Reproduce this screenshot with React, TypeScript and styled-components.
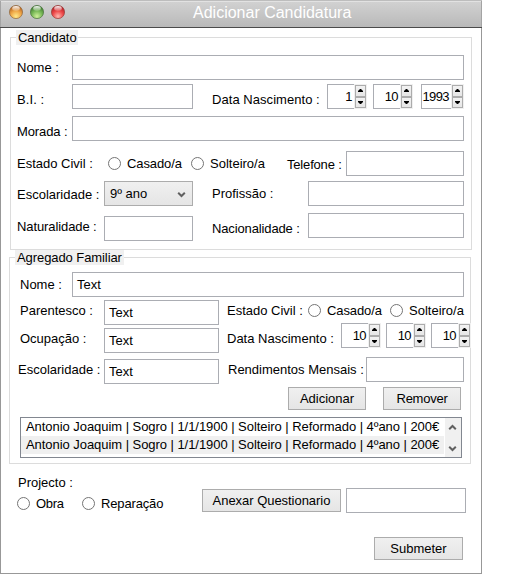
import React from "react";
import styled, { createGlobalStyle } from "styled-components";

const GlobalStyle = createGlobalStyle`
  body { margin: 0; background: #fff; }
  * { box-sizing: border-box; }
`;

const Window = styled.main`
  width: 482px;
  height: 574px;
  border: 1px solid #989898;
  border-top: none;
  background: #fff;
  color: #000;
  font: 13px/15px "Liberation Sans", Arial, sans-serif;
`;

const TitleBar = styled.header`
  display: grid;
  grid-template-columns: 21px 21px 21px 1fr;
  height: 28px;
  margin: 0 -1px;
  padding: 3px 0 0 8px;
  border-top: 1px solid #bdbdbd;
  border-bottom: 1px solid #4b4b4b;
  box-shadow: inset 1px 0 #a4a4a4, inset -1px 0 #a4a4a4, inset 0 1px #e2e2e2;
  background: linear-gradient(#d2d2d2, #b9b9b9);
`;

const Title = styled.h1`
  margin: 0 0 0 122px;
  color: #fff;
  font-size: 16px;
  font-weight: 400;
  line-height: 18px;
  white-space: nowrap;
`;

const Panel = styled.section<{ $left: number; $top: number; $height: number }>`
  width: 462px;
  height: ${(p) => p.$height}px;
  margin: ${(p) => p.$top}px 0 0 ${(p) => p.$left}px;
  border: 1px solid #dcdcdc;
`;

const Legend = styled.h2<{ $width: number }>`
  width: ${(p) => p.$width}px;
  height: 15px;
  margin: -8px 0 0 5px;
  padding-left: 2px;
  background: #f0f0f0;
  font-size: 13px;
  font-weight: 400;
  letter-spacing: -0.08px;
  white-space: nowrap;
`;

const Row = styled.div<{ $cols: string; $left: number; $top?: number; $height?: number }>`
  display: grid;
  grid-template-columns: ${(p) => p.$cols};
  align-items: start;
  justify-items: start;
  height: ${(p) => p.$height ?? 25}px;
  margin-top: ${(p) => p.$top ?? 0}px;
  padding-left: ${(p) => p.$left}px;
`;

const Label = styled.span<{ $top?: number; $track?: number }>`
  margin-top: ${(p) => p.$top ?? 5}px;
  letter-spacing: ${(p) => p.$track ?? 0}px;
  white-space: nowrap;
`;

const Field = styled.div<{ $width: number; $top?: number }>`
  width: ${(p) => p.$width}px;
  height: 25px;
  margin-top: ${(p) => p.$top ?? 0}px;
  padding: 4px;
  border: 1px solid #abadb3;
  background: #fff;
`;

const Select = styled.div`
  display: flex;
  justify-content: space-between;
  width: 89px;
  height: 25px;
  padding: 4px 6px 0 5px;
  border: 1px solid #acacac;
  background: linear-gradient(#f0f0f0, #e5e5e5);
`;

const Button = styled.button<{ $width: number; $top?: number; $track?: number }>`
  width: ${(p) => p.$width}px;
  height: 23px;
  margin: ${(p) => p.$top ?? 0}px 0 0;
  padding: 0 0 1px;
  border: 1px solid #acacac;
  border-radius: 0;
  background: linear-gradient(#f0f0f0, #e5e5e5);
  color: #000;
  font: inherit;
  letter-spacing: ${(p) => p.$track ?? 0}px;
  white-space: nowrap;
`;

const Radio = styled.i<{ $top?: number }>`
  width: 13px;
  height: 13px;
  margin-top: ${(p) => p.$top ?? 0}px;
  border: 1px solid #757575;
  border-radius: 50%;
  background: #fff;
`;

const SpinBox = styled.div<{ $width: number }>`
  display: grid;
  grid-template-columns: 1fr 11px;
  column-gap: 1px;
  width: ${(p) => p.$width}px;
  height: 25px;
  padding-right: 1px;
  background: #f0f0f0;
`;

const SpinValue = styled.div`
  padding: 4px 2px 0 0;
  border: 1px solid #abadb3;
  border-right: none;
  background: #fff;
  letter-spacing: -0.6px;
  text-align: right;
`;

const SpinButtons = styled.div`
  display: grid;
  grid-template-rows: 12px 11px;
  padding-top: 1px;
`;

const SpinButton = styled.div`
  display: flex;
  justify-content: center;
  padding-top: 3px;
  border: 1px solid #acacac;
  background: linear-gradient(#f2f2f2, #e6e6e6);
`;

const List = styled.div`
  display: grid;
  grid-template-columns: 1fr 16px;
  column-gap: 1px;
  width: 442px;
  height: 41px;
  margin: 7px 0 0 10px;
  border: 1px solid #828790;
`;

const ListItem = styled.div<{ $shaded?: boolean }>`
  height: 18px;
  padding: 1px 0 0 5px;
  background: ${(p) => (p.$shaded ? "#f0f0f0" : "#fff")};
  letter-spacing: -0.05px;
  white-space: nowrap;
`;

const ScrollBar = styled.div`
  display: flex;
  flex-direction: column;
  align-items: center;
  justify-content: space-between;
  padding: 6px 2px 5px 0;
  background: #f0f0f0;
`;

function Light({ id, rim, dark, mid, glow }: { id: string; rim: string; dark: string; mid: string; glow: string }) {
  return (
    <svg width="16" height="16" viewBox="0 0 16 16">
      <defs>
        <radialGradient id={id} cx=".5" cy=".82" r=".8">
          <stop offset="0" stopColor={glow} />
          <stop offset=".5" stopColor={mid} />
          <stop offset="1" stopColor={dark} />
        </radialGradient>
        <linearGradient id={id + "-shine"} x2="0" y2="1">
          <stop stopColor="#fff" stopOpacity=".95" />
          <stop offset="1" stopColor="#fff" stopOpacity=".15" />
        </linearGradient>
      </defs>
      <circle cx="8" cy="8" r="6.6" fill={`url(#${id})`} stroke={rim} strokeWidth=".7" />
      <ellipse cx="8" cy="4.5" rx="3.8" ry="2.4" fill={`url(#${id}-shine)`} />
    </svg>
  );
}

function Chevron({ up }: { up?: boolean }) {
  return (
    <svg width="9" height="7" viewBox="0 0 9 7">
      <path d={up ? "M1.2 5.2 4.5 2l3.3 3.2" : "M1.2 1.8 4.5 5l3.3-3.2"} fill="none" stroke="#606060" strokeWidth="2" />
    </svg>
  );
}

const SelectArrow = styled.span`
  display: flex;
  padding-top: 5px;
`;

function Spinner({ value, width = 40 }: { value: string; width?: number }) {
  return (
    <SpinBox $width={width}>
      <SpinValue>{value}</SpinValue>
      <SpinButtons>
        <SpinButton>
          <svg width="5" height="3" viewBox="0 0 5 3"><path d="M0 3V2L2 0h1l2 2v1Z" /></svg>
        </SpinButton>
        <SpinButton>
          <svg width="5" height="3" viewBox="0 0 5 3"><path d="M0 0v1l2 2h1l2-2V0Z" /></svg>
        </SpinButton>
      </SpinButtons>
    </SpinBox>
  );
}

const household = [
  "Antonio Joaquim | Sogro | 1/1/1900 | Solteiro | Reformado | 4ºano | 200€",
  "Antonio Joaquim | Sogro | 1/1/1900 | Solteiro | Reformado | 4ºano | 200€",
];

export default function App() {
  return (
    <>
      <GlobalStyle />
      <Window>
        <TitleBar>
          <Light id="amber" rim="#8d6a45" dark="#a9581c" mid="#f0a848" glow="#ffe98a" />
          <Light id="green" rim="#4d7441" dark="#35702a" mid="#79b957" glow="#cff09a" />
          <Light id="red" rim="#97403c" dark="#a81820" mid="#ee4a4a" glow="#ffb8b0" />
          <Title>Adicionar Candidatura</Title>
        </TitleBar>

        <Panel $left={9} $top={9} $height={213}>
          <Legend $width={62}>Candidato</Legend>
          <Row $left={6} $top={10} $cols="55px 392px">
            <Label>Nome :</Label>
            <Field $width={392} />
          </Row>
          <Row $left={6} $top={4} $cols="55px 140px 115px 46px 48px 43px">
            <Label $top={8} $track={0.1}>B.I. :</Label>
            <Field $width={121} />
            <Label $top={8} $track={0.05}>Data Nascimento :</Label>
            <Spinner value="1" />
            <Spinner value="10" />
            <Spinner value="1993" width={43} />
          </Row>
          <Row $left={6} $top={7} $cols="55px 392px">
            <Label $top={8} $track={-0.1}>Morada :</Label>
            <Field $width={392} />
          </Row>
          <Row $left={6} $top={10} $cols="91px 19px 64px 19px 77px 59px 118px">
            <Label>Estado Civil :</Label>
            <Radio $top={6} />
            <Label $track={-0.1}>Casado/a</Label>
            <Radio $top={6} />
            <Label>Solteiro/a</Label>
            <Label $top={6} $track={-0.18}>Telefone :</Label>
            <Field $width={118} />
          </Row>
          <Row $left={6} $top={5} $cols="87px 108px 96px 156px">
            <Label $top={6}>Escolaridade :</Label>
            <Select>
              9º ano
              <SelectArrow><Chevron /></SelectArrow>
            </Select>
            <Label>Profissão :</Label>
            <Field $width={156} />
          </Row>
          <Row $left={6} $top={7} $height={28} $cols="87px 108px 96px 156px">
            <Label $top={6} $track={-0.1}>Naturalidade :</Label>
            <Field $width={89} $top={3} />
            <Label $top={8} $track={-0.13}>Nacionalidade :</Label>
            <Field $width={156} />
          </Row>
        </Panel>

        <Panel $left={8} $top={7} $height={207}>
          <Legend $width={109}>Agregado Familiar</Legend>
          <Row $left={10} $top={7} $cols="52px 392px">
            <Label>Nome :</Label>
            <Field $width={392}>Text</Field>
          </Row>
          <Row $left={10} $top={3} $height={23} $cols="84px 123px 81px 19px 63px 19px 60px">
            <Label $top={3}>Parentesco :</Label>
            <Field $width={115}>Text</Field>
            <Label $top={3}>Estado Civil :</Label>
            <Radio $top={4} />
            <Label $top={3} $track={-0.1}>Casado/a</Label>
            <Radio $top={4} />
            <Label $top={3}>Solteiro/a</Label>
          </Row>
          <Row $left={10} $height={30} $cols="84px 123px 114px 45px 45px 40px">
            <Label $top={8}>Ocupação :</Label>
            <Field $width={115} $top={5}>Text</Field>
            <Label $top={8}>Data Nascimento :</Label>
            <Spinner value="10" />
            <Spinner value="10" />
            <Spinner value="10" />
          </Row>
          <Row $left={8} $top={4} $height={27} $cols="86px 124px 138px 98px">
            <Label>Escolaridade :</Label>
            <Field $width={115} $top={2}>Text</Field>
            <Label>Rendimentos Mensais :</Label>
            <Field $width={98} />
          </Row>
          <Row $left={278} $top={3} $height={23} $cols="95px 78px">
            <Button $width={78}>Adicionar</Button>
            <Button $width={78} $track={-0.25}>Remover</Button>
          </Row>
          <List>
            <div>
              {household.map((line, i) => (
                <ListItem key={i} $shaded={i % 2 === 1}>{line}</ListItem>
              ))}
            </div>
            <ScrollBar>
              <Chevron up />
              <Chevron />
            </ScrollBar>
          </List>
        </Panel>

        <Row $left={17} $top={11} $height={13} $cols="100px">
          <Label $top={0}>Projecto :</Label>
        </Row>
        <Row $left={16} $cols="19px 46px 19px 101px 144px 120px">
          <Radio $top={9} />
          <Label $top={8} $track={-0.3}>Obra</Label>
          <Radio $top={9} />
          <Label $top={8} $track={-0.15}>Reparação</Label>
          <Button $width={139} $top={1} $track={-0.04}>Anexar Questionario</Button>
          <Field $width={120} />
        </Row>
        <Row $left={373} $top={24} $height={23} $cols="89px">
          <Button $width={89}>Submeter</Button>
        </Row>
      </Window>
    </>
  );
}
